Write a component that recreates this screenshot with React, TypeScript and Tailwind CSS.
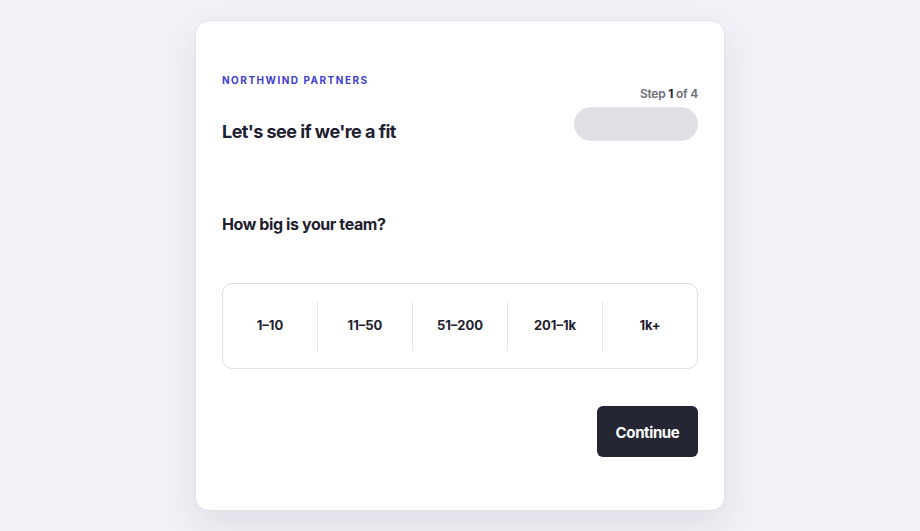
import React from "react";

const options = ["1–10", "11–50", "51–200", "201–1k", "1k+"];

export default function App() {
  return (
    <div
      className="min-h-[531px] w-full bg-[#f1f2f7] flex justify-center pt-[20px]"
      style={{ fontFamily: "Inter, 'Liberation Sans', sans-serif" }}
    >
      <div className="w-[530px] h-[491px] bg-white border border-[#e2e3ea] rounded-[14px] shadow-[0_14px_36px_rgba(30,32,60,0.09)] pt-[51px] px-[26px]">
        <div className="flex justify-between items-start">
          <div>
            <p className="text-[10px] leading-[16px] font-bold tracking-[0.15em] text-[#3d40d3]">
              NORTHWIND PARTNERS
            </p>
            <h1 className="mt-[30px] text-[18px] leading-[28px] font-bold text-[#1e2030] tracking-[-0.03em]">
              Let's see if we're a fit
            </h1>
          </div>
          <div className="flex flex-col items-end mt-[14px]">
            <p className="text-[12px] leading-[16px] font-semibold text-[#6b6d78] tracking-[-0.02em]">
              Step <span className="font-bold text-[#1e2030]">1</span> of 4
            </p>
            <div className="mt-[5px] w-[124px] h-[34px] rounded-full bg-[#e0e1e6]" />
          </div>
        </div>

        <h2 className="mt-[66px] text-[16px] leading-[24px] font-bold text-[#1e2030] tracking-[-0.025em]">
          How big is your team?
        </h2>

        <div className="mt-[47px] h-[86px] border border-[#dfe0e6] rounded-[10px] flex items-center">
          {options.map((o, i) => (
            <div
              key={o}
              className={`flex-1 h-[49px] flex items-center justify-center text-[13px] font-bold text-[#1e2030] ${
                i > 0 ? "border-l border-[#e4e5ea]" : ""
              }`}
            >
              {o}
            </div>
          ))}
        </div>

        <div className="flex justify-end mt-[37px]">
          <button className="w-[101px] h-[51px] pt-[3px] rounded-[6px] bg-[#242633] text-white text-[15px] font-bold tracking-[-0.025em]">
            Continue
          </button>
        </div>
      </div>
    </div>
  );
}
